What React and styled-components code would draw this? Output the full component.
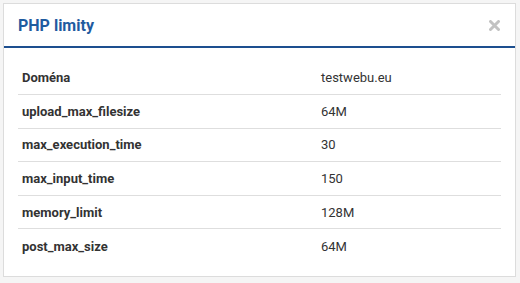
import React from "react";
import styled, { createGlobalStyle } from "styled-components";

const GlobalStyle = createGlobalStyle`
  html, body {
    margin: 0;
    padding: 0;
    background: #f5f5f5;
  }
  body {
    font-family: Roboto, "Liberation Sans", sans-serif;
    color: #333333;
  }
`;

const Page = styled.div`
  padding: 3px 4px 6px 3px;
`;

const Modal = styled.div`
  background: #ffffff;
  border: 1px solid #dcdcdc;
  height: 274px;
  box-sizing: border-box;
  display: flex;
  flex-direction: column;
`;

const Header = styled.div`
  display: flex;
  align-items: center;
  justify-content: space-between;
  height: 42px;
  padding: 0 14px 0 14px;
  border-bottom: 2px solid #1d4f8f;
  flex-shrink: 0;

  > h4 {
    margin: 0;
    font-size: 16px;
    font-weight: 700;
    color: #1f5b9f;
  }
`;

const Close = styled.button`
  border: 0;
  background: none;
  padding: 0;
  display: flex;
  cursor: pointer;
  margin-right: 1px;
  margin-top: 1px;
`;

const Body = styled.div`
  padding: 13.5px 14px 0 14px;
`;

const Row = styled.div`
  display: grid;
  grid-template-columns: 299px 1fr;
  height: 33.6px;
  align-items: center;
  border-bottom: ${({ $last }) => ($last ? "none" : "1px solid #dedede")};
  box-sizing: border-box;
  font-size: 13px;

  > span {
    padding-left: 4px;
  }

  > span:first-child {
    font-weight: 700;
  }
`;

const rows = [
  ["Doména", "testwebu.eu"],
  ["upload_max_filesize", "64M"],
  ["max_execution_time", "30"],
  ["max_input_time", "150"],
  ["memory_limit", "128M"],
  ["post_max_size", "64M"],
];

const CloseIcon = () => (
  <svg width="11" height="11" viewBox="0 0 11 11">
    <path
      d="M1.5 1.5 L9.5 9.5 M9.5 1.5 L1.5 9.5"
      stroke="#c2c2c2"
      strokeWidth="3"
      strokeLinecap="round"
    />
  </svg>
);

const App = () => {
  return (
    <>
      <GlobalStyle />
      <Page>
        <Modal>
          <Header>
            <h4>PHP limity</h4>
            <Close aria-label="Zavřít">
              <CloseIcon />
            </Close>
          </Header>
          <Body>
            {rows.map(([name, value], i) => (
              <Row key={name} $last={i === rows.length - 1}>
                <span>{name}</span>
                <span>{value}</span>
              </Row>
            ))}
          </Body>
        </Modal>
      </Page>
    </>
  );
};

export default App;
